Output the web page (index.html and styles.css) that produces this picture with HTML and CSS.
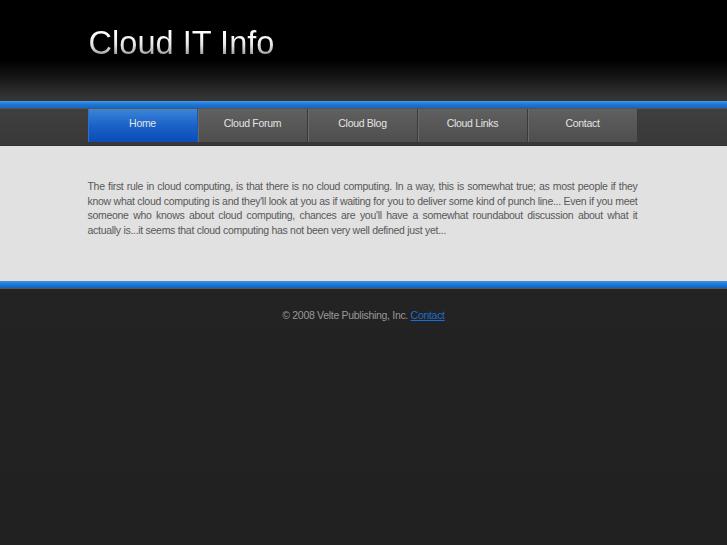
FILE: index.html
```html
<!DOCTYPE html>
<html>
<head>
<meta charset="utf-8">
<title>Cloud IT Info</title>
<link rel="stylesheet" href="styles.css">
</head>
<body>
<div class="header">
  <div class="wrap brand">
    <h1 class="logo">Cloud IT Info</h1>
  </div>
</div>
<div class="bluebar"></div>
<div class="navbar">
  <ul class="nav wrap">
    <li class="active"><a href="#">Home</a></li>
    <li><a href="#">Cloud Forum</a></li>
    <li><a href="#">Cloud Blog</a></li>
    <li><a href="#">Cloud Links</a></li>
    <li><a href="#">Contact</a></li>
  </ul>
</div>
<div class="content">
  <p class="wrap text">The first rule in cloud computing, is that there is no cloud computing. In a way, this is somewhat true; as most people if they know what cloud computing is and they'll look at you as if waiting for you to deliver some kind of punch line... Even if you meet someone who knows about cloud computing, chances are you'll have a somewhat roundabout discussion about what it actually is...it seems that cloud computing has not been very well defined just yet...</p>
</div>
<div class="bluebar bottom"></div>
<div class="footer">
  <p class="copy">© 2008 Velte Publishing, Inc. <a href="#">Contact</a></p>
</div>
</body>
</html>
```
FILE: styles.css
```css
html, body {
  margin: 0;
  padding: 0;
  height: 100%;
}
body {
  background: linear-gradient(#2e2e2e, #242424 120px, #212121);
  font-family: "Liberation Sans", Arial, sans-serif;
  min-height: 545px;
}
.wrap {
  width: 550px;
  margin: 0 auto;
  box-sizing: border-box;
  position: relative;
  left: -1px;
}
.header {
  height: 101px;
  background: linear-gradient(#000 0, #000 60px, #161616 78px, #2c2c2c 92px, #363636 100px);
}
.brand {
  padding: 25px 0 0 1px;
}
.logo {
  margin: 0;
  font-weight: normal;
  font-size: 32.6px;
  line-height: 36px;
  color: #eee;
  background: linear-gradient(#ffffff 25%, #e6e6e6 55%, #9a9a9a 85%);
  -webkit-background-clip: text;
  background-clip: text;
  -webkit-text-fill-color: transparent;
  display: inline-block;
}
.bluebar {
  height: 7px;
  background: linear-gradient(#4a9ae8, #1f7ad8 40%, #1565c4);
  border-bottom: 1px solid #555;
}
.bluebar.bottom {
  height: 7px;
  background: linear-gradient(#3a92e6, #1e78d6 50%, #1262be);
  border-bottom: 1px solid #555;
}
.navbar {
  height: 36px;
  background: linear-gradient(#3f3f3f, #383838);
  border-bottom: 1px solid #303030;
}
.nav {
  list-style: none;
  padding: 0;
  margin: 0 auto;
  display: flex;
  height: 33px;
}
.nav li {
  width: 110px;
  height: 33px;
  box-sizing: border-box;
  background: linear-gradient(#606060, #4e4e4e);
  border-left: 1px solid #6a6a6a;
  border-right: 1px solid #3a3a3a;
  display: flex;
  align-items: center;
  justify-content: center;
}
.nav li.active {
  background: linear-gradient(#3d85d8, #1a62c8 50%, #0a4cb8);
  border-left: 1px solid #2f6fc8;
  border-right: 1px solid #1a55b0;
}
.nav a {
  color: #e4e4e4;
  text-decoration: none;
  font-size: 10.5px;
  letter-spacing: -0.3px;
  padding-bottom: 5px;
}
.content {
  background: #e1e1e1;
  height: 135px;
  padding-top: 1px;
  box-sizing: border-box;
}
.text {
  margin: 0 auto;
  padding-top: 32px;
  font-size: 10.5px;
  line-height: 14.5px;
  letter-spacing: -0.29px;
  color: #585858;
  text-align: justify;
}
.footer {
  padding-top: 20px;
}
.copy {
  margin: 0;
  text-align: center;
  font-size: 10.5px;
  letter-spacing: -0.3px;
  color: #999;
}
.copy a {
  color: #1a6fd0;
  text-decoration: underline;
}
```
